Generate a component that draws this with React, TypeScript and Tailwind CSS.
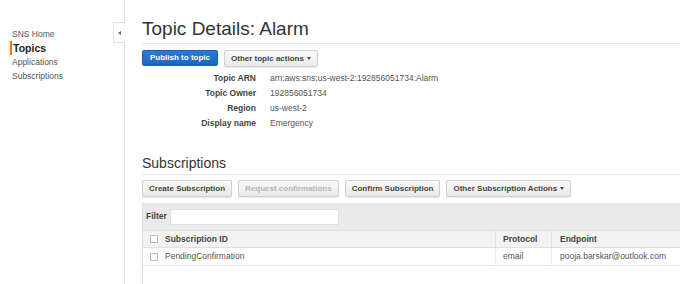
const navItems = ['SNS Home', 'Topics', 'Applications', 'Subscriptions'];

const details: [string, string][] = [
    ['Topic ARN', 'arn:aws:sns:us-west-2:192856051734:Alarm'],
    ['Topic Owner', '192856051734'],
    ['Region', 'us-west-2'],
    ['Display name', 'Emergency'],
];

const Caret = () => <span className="ml-[3px] inline-block border-x-[2.5px] border-t-[3px] border-x-transparent border-t-[#444] align-middle" />;

const GrayButton = ({ label, disabled, caret }: { label: string; disabled?: boolean; caret?: boolean }) => (
    <button
        className={`h-[17px] rounded-[2px] border border-[#d0d0d0] bg-gradient-to-b from-[#fafafa] to-[#e9e9e9] px-[6px] text-[8px] font-bold leading-none shadow-[0_1px_1px_rgba(0,0,0,0.08)] ${disabled ? 'text-[#b5b5b5]' : 'text-[#444]'}`}
    >
        {label}
        {caret && <Caret />}
    </button>
);

const Checkbox = () => <span className="inline-block h-[8px] w-[8px] border border-[#bbb] bg-white" />;

export default function App() {
    return (
        <div className="flex h-[284px] w-[680px] overflow-hidden bg-white font-['Liberation_Sans',Arial,sans-serif] text-[#444]">
            <aside className="relative w-[125px] shrink-0 border-r border-[#e3e3e3] pt-[27px] pl-[10px]">
                <ul className="flex flex-col">
                    {navItems.map((item) =>
                        item === 'Topics' ? (
                            <li key={item} className="flex h-[14px] items-center border-l-2 border-[#e8782d] pl-[1px] text-[10.5px] leading-none font-bold text-[#222]">
                                {item}
                            </li>
                        ) : (
                            <li key={item} className="flex h-[14px] items-center pl-[2px] text-[8.5px] leading-none text-[#555]">
                                {item}
                            </li>
                        )
                    )}
                </ul>
                <div className="absolute top-[22px] right-[-1px] flex h-[21px] w-[12px] items-center justify-center border border-r-0 border-[#e0e0e0] bg-white">
                    <span className="inline-block border-y-[2.5px] border-r-[3px] border-y-transparent border-r-[#666]" />
                </div>
            </aside>

            <main className="flex-1 pl-[17px] pt-[19px]">
                <h1 className="border-b border-[#e6e6e6] pb-[4px] text-[19px] leading-[20px] text-[#333]">Topic Details: Alarm</h1>

                <div className="mt-[6px] flex gap-[6px]">
                    <button className="h-[16px] rounded-[2px] border border-[#1b5fb0] bg-gradient-to-b from-[#2b7ad6] to-[#1d66c0] px-[7px] text-[8px] font-bold leading-none text-white">
                        Publish to topic
                    </button>
                    <GrayButton label="Other topic actions" caret />
                </div>

                <div className="mt-[4px] flex flex-col">
                    {details.map(([k, v]) => (
                        <div key={k} className="flex h-[15px] items-center text-[8.5px] leading-none">
                            <span className="w-[114px] text-right font-bold text-[#444]">{k}</span>
                            <span className="ml-[14px] text-[#555]">{v}</span>
                        </div>
                    ))}
                </div>

                <h2 className="mt-[24px] border-b border-[#e6e6e6] pb-[3px] text-[14px] leading-[16px] text-[#333]">Subscriptions</h2>

                <div className="mt-[5px] flex gap-[6px]">
                    <GrayButton label="Create Subscription" />
                    <GrayButton label="Request confirmations" disabled />
                    <GrayButton label="Confirm Subscription" />
                    <GrayButton label="Other Subscription Actions" caret />
                </div>

                <div className="mt-[6px] border-l border-[#ddd]">
                    <div className="flex h-[27px] items-center bg-[#ebebeb] pl-[3px]">
                        <span className="text-[8.5px] font-bold">Filter</span>
                        <input className="ml-[3px] h-[16px] w-[169px] border border-[#e0e0e0] bg-white" />
                    </div>
                    <div className="flex h-[18px] items-center border-y border-[#e0e0e0] bg-[#f3f3f3] text-[8.5px] leading-none font-bold text-[#444]">
                        <span className="flex w-[22px] justify-center"><Checkbox /></span>
                        <span className="w-[330px]">Subscription ID</span>
                        <span className="h-full border-l border-[#e0e0e0]" />
                        <span className="w-[55px] pl-[7px]">Protocol</span>
                        <span className="h-full border-l border-[#e0e0e0]" />
                        <span className="pl-[8px]">Endpoint</span>
                    </div>
                    <div className="flex h-[18px] items-center border-b border-[#e6e6e6] text-[8.5px] leading-none text-[#555]">
                        <span className="flex w-[22px] justify-center"><Checkbox /></span>
                        <span className="w-[330px]">PendingConfirmation</span>
                        <span className="h-full border-l border-[#eee]" />
                        <span className="w-[55px] pl-[7px]">email</span>
                        <span className="h-full border-l border-[#eee]" />
                        <span className="pl-[8px]">pooja.barskar@outlook.com</span>
                    </div>
                    <div className="h-[20px]" />
                </div>
            </main>
        </div>
    );
}
